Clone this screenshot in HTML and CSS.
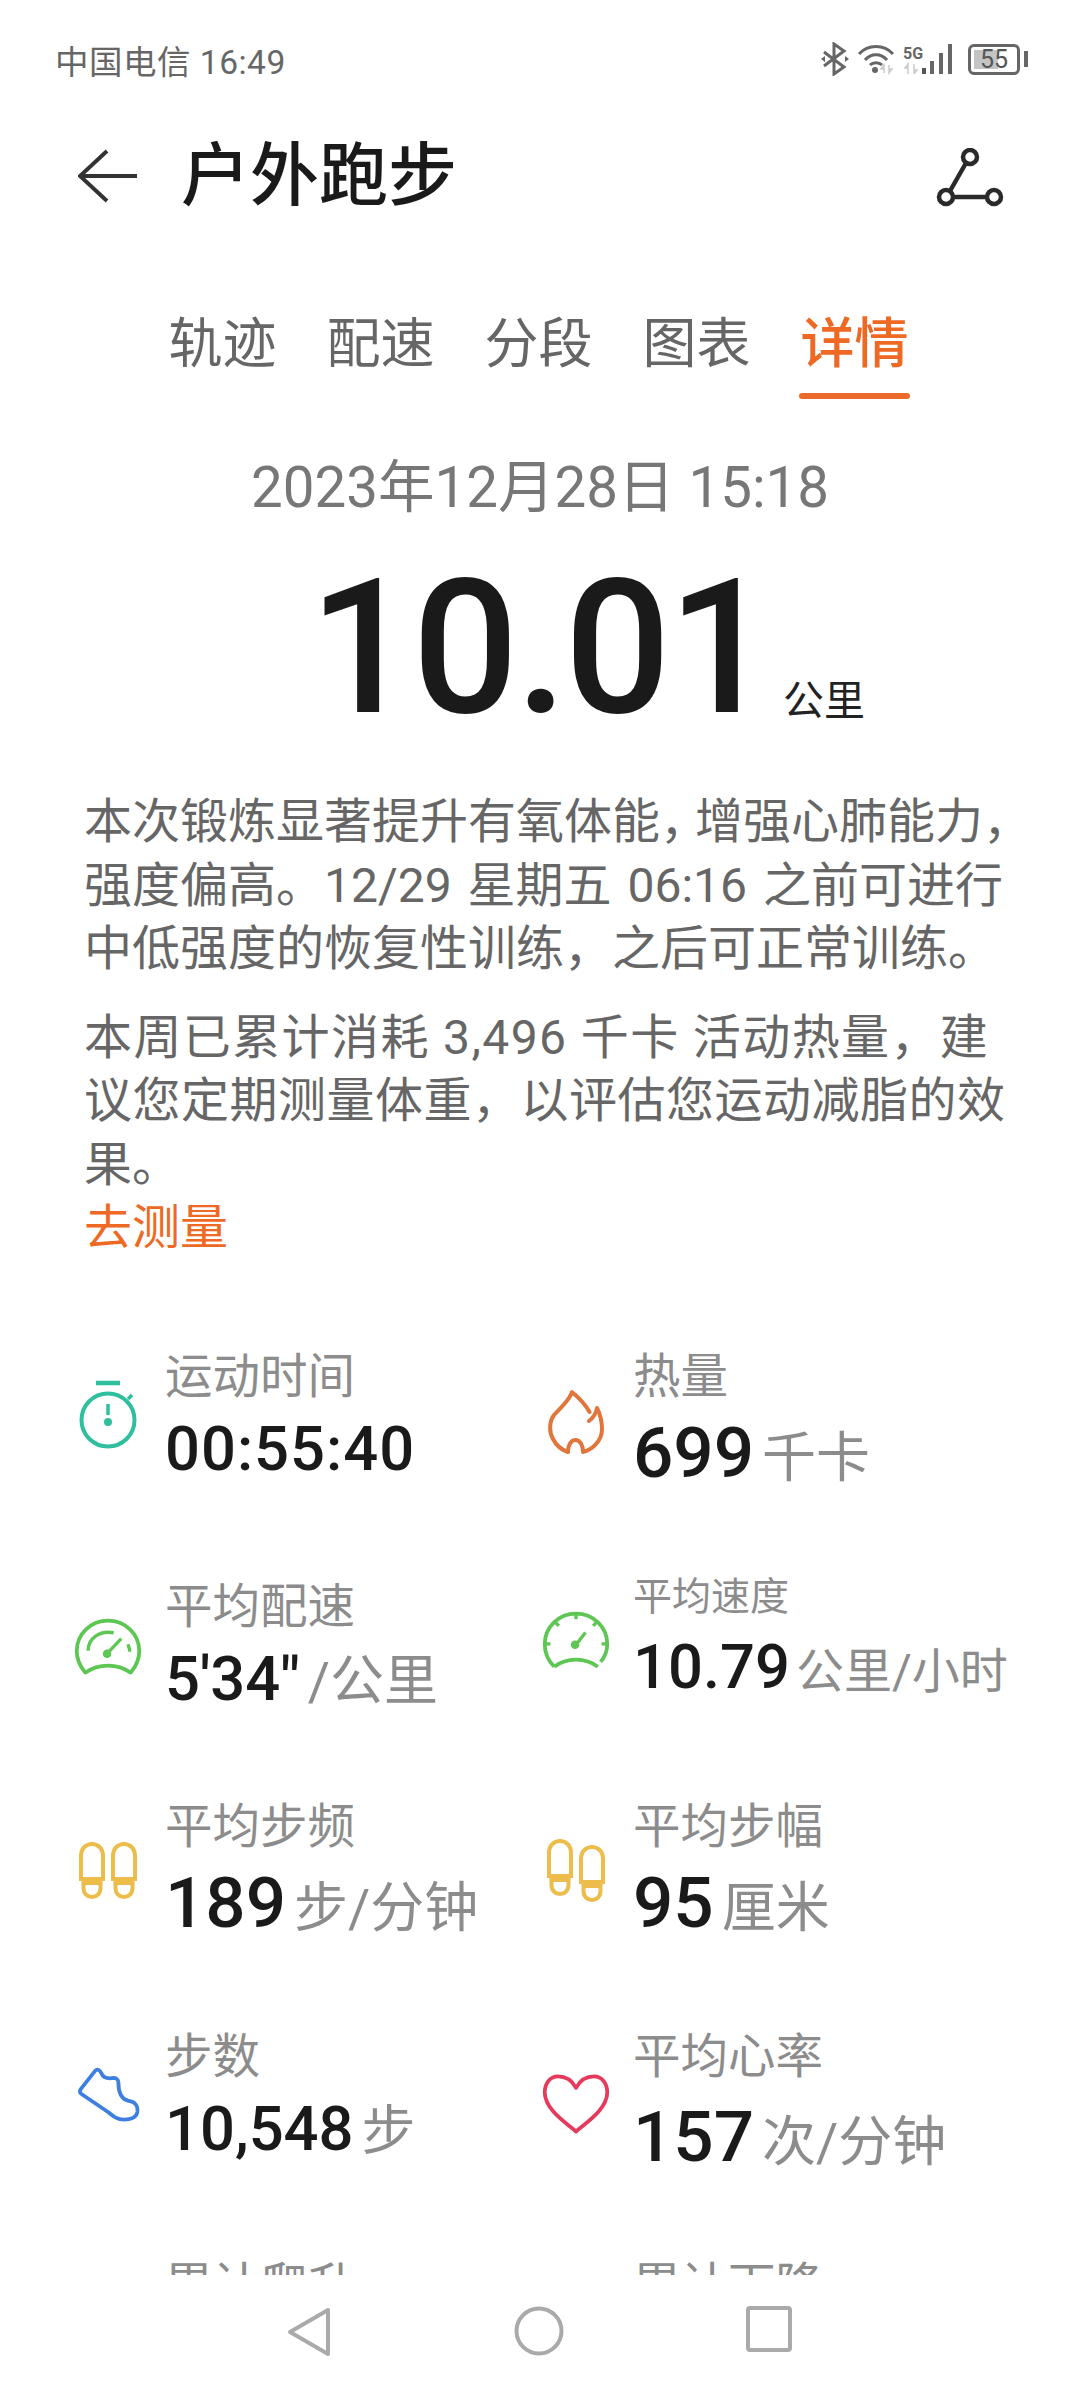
FILE: index.html
```html
<!DOCTYPE html>
<html lang="zh-CN">
<head>
  <meta charset="UTF-8" />
  <meta name="viewport" content="width=device-width, initial-scale=1" />
  <title>户外跑步</title>
  <link rel="stylesheet" href="styles.css">
</head>
<body>
  <div class="phone">
    <!-- status bar -->
    <div class="status">
      <span class="carrier">中国电信 16:49</span>
      <div class="status-icons">
        <svg width="28" height="34" viewBox="0 0 28 34"><path d="M3 10 L23 25 L13 32 V2 L23 9 L3 24" fill="none" stroke="#666" stroke-width="3"/><path d="M0 17l4-3v6zM28 17l-4-3v6z" fill="#666"/></svg>
        <svg width="38" height="32" viewBox="0 0 38 32"><path d="M2 11 C11 1 27 1 36 11M8 17 C14 10 24 10 30 17M13 22 C16 19 22 19 25 22" fill="none" stroke="#666" stroke-width="3"/><circle cx="18" cy="27" r="3" fill="#666"/><path d="M27 30 V22M27 22l-3 4h3zM32 22 V30M32 30l3-4h-3z" fill="#ccc" stroke="#ccc" stroke-width="1.5"/></svg>
        <div class="net">
          <div class="net-col">
            <span class="net-label">5G</span>
            <svg width="18" height="13" viewBox="0 0 18 13"><path d="M5 13 V3M5 3l-3 4h3zM11 3 V13M11 13l3-4h-3z" fill="#ccc" stroke="#ccc" stroke-width="1.5"/></svg>
          </div>
          <svg width="32" height="30" viewBox="0 0 32 30"><rect x="0" y="24" width="4" height="6" fill="#555"/><rect x="8" y="17" width="4" height="13" fill="#666"/><rect x="17" y="9" width="4" height="21" fill="#666"/><rect x="26" y="0" width="4" height="30" fill="#666"/></svg>
        </div>
        <div class="battery">
          <div class="battery-body"><span class="battery-fill"></span><span class="battery-num">55</span></div>
          <span class="battery-nub"></span>
        </div>
      </div>
    </div>

    <!-- title -->
    <header class="topbar">
      <svg width="60" height="54" viewBox="0 0 60 54"><path d="M29 2 L2 27 L29 52M2 27 H59" fill="none" stroke="#333" stroke-width="4"/></svg>
      <h1>户外跑步</h1>
      <svg class="share" width="68" height="62" viewBox="0 0 68 62"><path d="M30 15 L14 43M17 49 H51" fill="none" stroke="#2a2a2a" stroke-width="4.5"/><circle cx="34" cy="9" r="7" fill="none" stroke="#2a2a2a" stroke-width="4.5"/><circle cx="10" cy="49" r="7" fill="none" stroke="#2a2a2a" stroke-width="4.5"/><circle cx="58" cy="49" r="7" fill="none" stroke="#2a2a2a" stroke-width="4.5"/></svg>
    </header>

    <nav class="tabs">
      <a>轨迹</a>
      <a>配速</a>
      <a>分段</a>
      <a>图表</a>
      <a class="active">详情</a>
    </nav>

    <div class="date">2023年12月28日 15:18</div>
    <div class="distance"><span class="distance-num">10.01</span><span class="distance-unit">公里</span></div>

    <section class="advice">
      <p>本次锻炼显著提升有氧体能<span class="tight">，</span>增强心肺能力，<br><span class="wide">强度偏高。12/29 星期五 06:16 之前可进行</span><br>中低强度的恢复性训练，之后可正常训练。</p>
      <p><span class="spread">本周已累计消耗 3,496 千卡 活动热量，建</span><br><span class="spread-sm">议您定期测量体重，以评估您运动减脂的效</span><br>果。<br><a class="link">去测量</a></p>
    </section>

    <section class="stats">
      <div class="stat">
        <svg class="icon ic-watch" width="72" height="72" viewBox="0 0 72 72"><path d="M24 3 H48" stroke="#2fbf9f" stroke-width="4.5" fill="none"/><circle cx="36" cy="40" r="26.5" fill="none" stroke="#2fbf9f" stroke-width="4"/><path d="M36 24 V35" stroke="#2fbf9f" stroke-width="3.5"/><circle cx="36" cy="42" r="4" fill="#2fbf9f"/><path d="M56 19 L60 15" stroke="#2fbf9f" stroke-width="3.5"/></svg>
        <div class="stat-text"><div class="label">运动时间</div><div class="value time">00:55:40</div></div>
      </div>
      <div class="stat">
        <svg class="icon ic-flame" width="72" height="72" viewBox="0 0 72 72"><path d="M49.6 24 C45 16 38 9 32 4 C30 12 20 20 14 27 C9 34 9 44 13 51 C16 57 22 62 28 64 C28 57 31 52 35.5 52 C40 52 43 57 43 64 C51 62 62 54 62 41 C62 33 60 26 57 20 C56 26 53 30 49 33" fill="none" stroke="#e0763c" stroke-width="4" stroke-linejoin="round" stroke-linecap="round"/></svg>
        <div class="stat-text"><div class="label">热量</div><div class="value big">699<span class="unit">千卡</span></div></div>
      </div>

      <div class="stat">
        <svg class="icon ic-pace" width="72" height="72" viewBox="-2 -2 76 76"><path d="M12 62 C26 52 46 52 60 62 C66 55 69 46 69 39 C69 21 54 7 36 7 C18 7 3 21 3 39 C3 46 6 55 12 62 Z" fill="none" stroke="#5ec653" stroke-width="4" stroke-linejoin="round"/><path d="M15 39 C15 26 27 17 42 20M57 32 C58 35 59 37 59 40" fill="none" stroke="#5ec653" stroke-width="3.5"/><path d="M36 41 L50 26" stroke="#5ec653" stroke-width="3.5"/><circle cx="35" cy="42" r="4.5" fill="#5ec653"/></svg>
        <div class="stat-text"><div class="label">平均配速</div><div class="value">5'34"<span class="unit">/公里</span></div></div>
      </div>
      <div class="stat small">
        <svg class="icon ic-speed" width="72" height="72" viewBox="-2 -2 76 76"><path d="M13 62 C26 52 46 52 59 62 M62 57 C67 51 69 45 69 38 C69 20 54 6 36 6 C18 6 3 20 3 38 C3 47 7 56 13 62" fill="none" stroke="#5ec653" stroke-width="4"/><path d="M36 6 V12M14 15 L18 19M58 15 L54 19M3 38 H9M69 38 H63" stroke="#5ec653" stroke-width="3.5"/><path d="M36 39 L46 26" stroke="#5ec653" stroke-width="3.5"/><circle cx="35" cy="39" r="4.5" fill="#5ec653"/></svg>
        <div class="stat-text"><div class="label">平均速度</div><div class="value">10.79<span class="unit">公里/小时</span></div></div>
      </div>

      <div class="stat">
        <svg class="icon ic-feet" width="72" height="72" viewBox="0 0 72 72"><g fill="none" stroke="#ecbd4b" stroke-width="4"><path d="M9 41 V18 C9 2 31 2 31 18 V41 Z"/><path d="M11.500 45 H28.500 V50 C28.500 62 11.500 62 11.500 50 Z"/><path d="M41 41 V18 C41 2 63 2 63 18 V41 Z"/><path d="M43.500 45 H60.500 V50 C60.500 62 43.500 62 43.500 50 Z"/></g></svg>
        <div class="stat-text"><div class="label">平均步频</div><div class="value big">189<span class="unit">步/分钟</span></div></div>
      </div>
      <div class="stat">
        <svg class="icon ic-feet" width="72" height="72" viewBox="0 0 72 72"><g fill="none" stroke="#ecbd4b" stroke-width="4"><path d="M9 38 V15 C9 -1 31 -1 31 15 V38 Z"/><path d="M11.500 42 H28.500 V47 C28.500 59 11.500 59 11.500 47 Z"/><path d="M41 44 V21 C41 5 63 5 63 21 V44 Z"/><path d="M43.500 48 H60.500 V53 C60.500 65 43.500 65 43.500 53 Z"/></g></svg>
        <div class="stat-text"><div class="label">平均步幅</div><div class="value big">95<span class="unit">厘米</span></div></div>
      </div>

      <div class="stat">
        <svg class="icon ic-shoe" width="72" height="72" viewBox="-2 -2 76 76"><path d="M7 30 L22 11 C24 8 27 9 29 13 C31 18 36 19 42 18 C45 18 47 20 47 23 C47 33 50 40 57 42 C63 43 68 45 67 54 C66 60 60 62 53 62 C46 62 42 59 36 54 L8 35 C6 34 6 32 7 30 Z" fill="none" stroke="#3f7fe0" stroke-width="4" stroke-linejoin="round"/></svg>
        <div class="stat-text"><div class="label">步数</div><div class="value">10,548<span class="unit">步</span></div></div>
      </div>
      <div class="stat">
        <svg class="icon ic-heart" width="72" height="72" viewBox="-2 -2 76 76"><path d="M36 20 C31 11 24 8 17 8 C8 8 3 16 3 25 C3 42 24 56 36 66 C48 56 69 42 69 25 C69 16 64 8 55 8 C48 8 41 11 36 20 Z" fill="none" stroke="#e6395c" stroke-width="4" stroke-linejoin="round"/></svg>
        <div class="stat-text"><div class="label">平均心率</div><div class="value big low">157<span class="unit">次/分钟</span></div></div>
      </div>

      <div class="stat">
        <span class="icon"></span>
        <div class="stat-text"><div class="label">累计爬升</div></div>
      </div>
      <div class="stat">
        <span class="icon"></span>
        <div class="stat-text"><div class="label">累计下降</div></div>
      </div>
    </section>

    <!-- nav bar lies over the scrolled content -->
    <div class="navbar">
      <svg width="46" height="52" viewBox="0 0 46 52"><path d="M42 4 V48 L4 26 Z" fill="none" stroke="#aaa" stroke-width="4" stroke-linejoin="round"/></svg>
      <svg width="50" height="50" viewBox="0 0 50 50"><circle cx="25" cy="25" r="22.500" fill="none" stroke="#aaa" stroke-width="4"/></svg>
      <svg width="46" height="46" viewBox="0 0 46 46"><rect x="2" y="2" width="42" height="42" rx="2" fill="none" stroke="#aaa" stroke-width="4"/></svg>
    </div>
  </div>
</body>
</html>
```

FILE: styles.css
```css
* {
  box-sizing: border-box;
}
html, body {
  margin: 0;
  padding: 0;
  background: #fff;
}
body {
  font-family: Roboto, "Noto Sans CJK SC", sans-serif;
}

.phone {
  position: relative;
  width: 1080px;
  height: 2388px;
  overflow: hidden;
  background: #fff;
}

/* status bar */
.status {
  display: flex;
  justify-content: space-between;
  align-items: center;
  height: 120px;
  padding: 0 52px 2px 55px;
  color: #666;
}
.carrier {
  font-size: 33.500px;
  letter-spacing: 0.5px;
}
.status-icons {
  display: flex;
  align-items: center;
  gap: 8px;
}
.net {
  display: flex;
  align-items: flex-end;
  height: 30px;
}
.net-col {
  display: flex;
  flex-direction: column;
  width: 18px;
  margin-right: 1px;
}
.net-label {
  font-size: 16px;
  font-weight: 700;
  line-height: 15px;
}
.battery {
  display: flex;
  align-items: center;
  gap: 4px;
  margin-left: 6px;
}
.battery-body {
  position: relative;
  width: 52px;
  height: 31px;
  border: 3px solid #666;
  border-radius: 6px;
  display: flex;
  align-items: center;
  justify-content: center;
}
.battery-fill {
  position: absolute;
  left: 3px;
  top: 3px;
  bottom: 3px;
  width: 24px;
  background: #c4c4c4;
}
.battery-num {
  position: relative;
  font-size: 25px;
  line-height: 1;
  color: #555;
}
.battery-nub {
  width: 4px;
  height: 16px;
  background: #666;
}

/* title row */
.topbar {
  display: flex;
  align-items: center;
  height: 112px;
  padding: 0 76px 0 78px;
}
.topbar h1 {
  flex: 1;
  margin: 0 0 0 43px;
  font-size: 69px;
  font-weight: 500;
  line-height: 1;
  color: #1a1a1a;
}
.share {
  margin-top: 6px;
}

/* tabs */
.tabs {
  display: flex;
  justify-content: center;
  gap: 50px;
  margin-top: 78px;
  padding-right: 3px;
  height: 87px;
}
.tabs a {
  position: relative;
  font-size: 54px;
  line-height: 70px;
  color: #666;
}
.tabs a.active {
  color: #ee6a24;
  font-weight: 500;
}
.tabs a.active::after {
  content: "";
  position: absolute;
  left: -2px;
  right: -1px;
  bottom: -2px;
  height: 6px;
  border-radius: 3px;
  background: #ec6a2c;
}

.date {
  margin-top: 57px;
  text-align: center;
  font-size: 56.500px;
  line-height: 68px;
  color: #777;
}
.distance {
  display: flex;
  justify-content: center;
  align-items: flex-end;
  height: 180px;
  margin-top: 37px;
  padding-left: 94px;
}
.distance-num {
  font-size: 187px;
  font-weight: 500;
  line-height: 180px;
  letter-spacing: -3px;
  color: #1a1a1a;
}
.distance-unit {
  margin: 0 0 16px 12px;
  font-size: 41px;
  line-height: 44px;
  color: #222;
}

.advice {
  margin-top: 51px;
  padding: 0 20px 0 84px;
  font-size: 48px;
  line-height: 63.500px;
  color: #666;
  white-space: nowrap;
}
.advice p {
  margin: 0 0 25px;
}
/* the phone's text engine stretches some lines, these follow it */
.tight {
  letter-spacing: -13px;
}
.wide {
  word-spacing: 4px;
}
.spread {
  letter-spacing: 1.4px;
}
.spread-sm {
  letter-spacing: 0.5px;
}
.link {
  color: #ee6a24;
}

/* stat grid */
.stats {
  display: grid;
  grid-template-columns: 468px 468px;
  grid-template-rows: 230px 220px 230px 229px 120px;
  margin-top: 87px;
  padding-left: 72px;
}
.stat {
  display: flex;
  align-items: flex-start;
  gap: 21px;
}
.icon {
  flex: none;
  width: 72px;
  height: 72px;
}
.ic-watch { margin-top: 33px; }
.ic-flame { margin-top: 41px; }
.ic-pace { margin-top: 35px; }
.ic-speed { margin-top: 29px; }
.ic-feet { margin-top: 41px; }
.ic-shoe { margin-top: 32px; }
.ic-heart { margin-top: 40px; }

.label {
  font-size: 47.500px;
  line-height: 60px;
  color: #8c8c8c;
}
.value {
  margin-top: 6px;
  font-size: 61.500px;
  font-weight: 500;
  line-height: 72px;
  color: #1a1a1a;
  white-space: nowrap;
}
.value.time {
  letter-spacing: 1px;
}
.value.big {
  margin-top: 10px;
  font-size: 71px;
}
.value.low {
  margin-top: 14px;
}
.unit {
  margin-left: 8px;
  font-size: 54px;
  font-weight: 400;
  color: #8c8c8c;
}
.stat.small .stat-text {
  margin-top: -8px;
}
.stat.small .label {
  font-size: 39px;
  line-height: 56px;
}
.stat.small .value {
  margin-top: 6px;
}
.stat.small .unit {
  margin-left: 6px;
  font-size: 48px;
}

/* system nav bar */
.navbar {
  position: absolute;
  left: 0;
  right: 0;
  bottom: 0;
  height: 113px;
  display: grid;
  grid-template-columns: 46px 50px 46px;
  justify-content: center;
  column-gap: 182px;
  align-items: start;
  padding: 31px 2px 0 0;
  background: #fff;
}
```
